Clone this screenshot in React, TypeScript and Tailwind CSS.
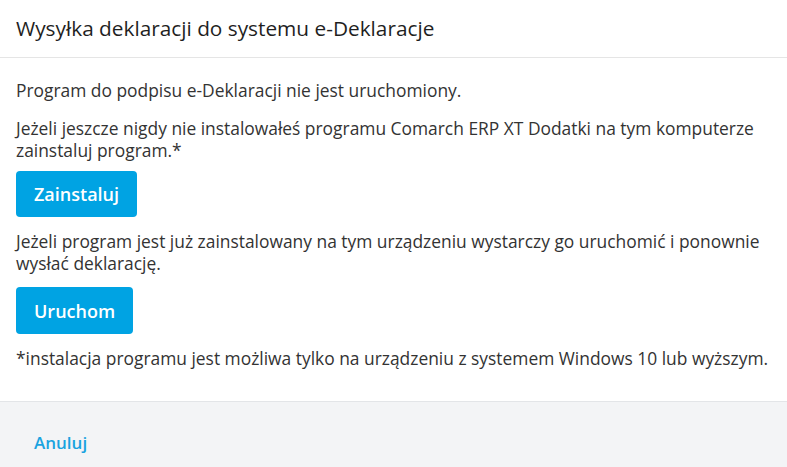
const App = () => {
  return (
    <div className="w-[787px] h-[467px] bg-white flex flex-col font-['Open_Sans',sans-serif]">
      <div className="h-[58px] flex items-center px-4 border-b border-[#e5e5e5] shrink-0">
        <h2 className="text-[20.8px] text-[#1f1f1f]">Wysyłka deklaracji do systemu e-Deklaracje</h2>
      </div>

      <div className="flex-1 px-4 pt-[21px] text-[17.4px] leading-[22px] text-[#333333]">
        <p>Program do podpisu e-Deklaracji nie jest uruchomiony.</p>
        <p className="mt-[16px]">
          Jeżeli jeszcze nigdy nie instalowałeś programu Comarch ERP XT Dodatki na tym komputerze zainstaluj program.*
        </p>
        <button className="mt-[10px] h-[46px] px-[18px] rounded-[4px] bg-[#00a3e3] text-white font-semibold text-[18px]">
          Zainstaluj
        </button>
        <p className="mt-[13px]">
          Jeżeli program jest już zainstalowany na tym urządzeniu wystarczy go uruchomić i ponownie wysłać deklarację.
        </p>
        <button className="mt-[13px] h-[47px] px-[18px] rounded-[4px] bg-[#00a3e3] text-white font-semibold text-[18px]">
          Uruchom
        </button>
        <p className="mt-[13px] whitespace-nowrap">
          *instalacja programu jest możliwa tylko na urządzeniu z systemem Windows 10 lub wyższym.
        </p>
      </div>

      <div className="h-[66px] bg-[#f3f4f6] border-t border-[#e3e5e8] flex items-center px-[34px] shrink-0">
        <button className="text-[#1aa3e0] font-semibold text-[17px] mt-[16px]">Anuluj</button>
      </div>
    </div>
  );
};

export default App;
